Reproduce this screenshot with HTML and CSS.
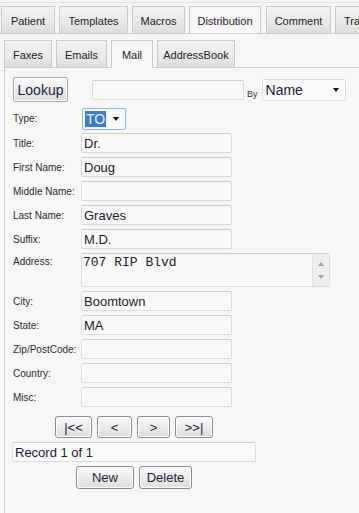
FILE: index.html
```html
<!DOCTYPE html>
<html lang="en">
<head>
  <meta charset="UTF-8">
  <meta name="viewport" content="width=device-width, initial-scale=1.0">
  <title>Distribution - Mail</title>
  <link rel="stylesheet" href="styles.css">
</head>
<body>

<div class="tabs">
  <span class="tab">Patient</span>
  <span class="tab">Templates</span>
  <span class="tab">Macros</span>
  <span class="tab active">Distribution</span>
  <span class="tab">Comment</span>
  <span class="tab">Transcription</span>
</div>

<div class="outer">
  <div class="subtabs">
    <span class="tab">Faxes</span>
    <span class="tab">Emails</span>
    <span class="tab active">Mail</span>
    <span class="tab">AddressBook</span>
  </div>

  <div class="pane">
    <div class="lookup-row">
      <button class="btn lookup">Lookup</button>
      <input class="field search" type="text">
      <span class="by">By</span>
      <div class="fake-select name-select">
        <span>Name</span>
        <span class="arrow"></span>
      </div>
    </div>

    <div class="form">
      <label>Type:</label>
      <div class="fake-select type-select">
        <span class="picked">TO</span>
        <span class="arrow"></span>
      </div>

      <label>Title:</label>
      <input class="field" type="text" value="Dr.">

      <label>First Name:</label>
      <input class="field" type="text" value="Doug">

      <label>Middle Name:</label>
      <input class="field" type="text">

      <label>Last Name:</label>
      <input class="field" type="text" value="Graves">

      <label>Suffix:</label>
      <input class="field" type="text" value="M.D.">

      <label class="top">Address:</label>
      <div class="address">
        <textarea>707 RIP Blvd</textarea>
        <div class="scrollbar">
          <span class="up"></span>
          <span class="down"></span>
        </div>
      </div>

      <label>City:</label>
      <input class="field" type="text" value="Boomtown">

      <label>State:</label>
      <input class="field" type="text" value="MA">

      <label>Zip/PostCode:</label>
      <input class="field" type="text">

      <label>Country:</label>
      <input class="field" type="text">

      <label>Misc:</label>
      <input class="field" type="text">
    </div>

    <div class="records">
      <div class="nav">
        <button class="btn first">|&lt;&lt;</button>
        <button class="btn prev">&lt;</button>
        <button class="btn next">&gt;</button>
        <button class="btn last">&gt;&gt;|</button>
      </div>
      <input class="field record" type="text" value="Record 1 of 1">
      <div class="actions">
        <button class="btn new">New</button>
        <button class="btn delete">Delete</button>
      </div>
    </div>
  </div>
</div>

</body>
</html>
```

FILE: styles.css
```css
body {
  margin: 0;
  background-color: #f7f7f7;
  font-family: "Liberation Sans", Arial, sans-serif;
  color: #222;
  overflow: hidden;
}

/* tabs */
.tabs {
  display: flex;
  gap: 4px;
  margin-top: 2px;
  padding: 3px 0 0 1px;
  border-top: 1px solid #e4e4e4;
  border-bottom: 1px solid #cdcdcd;
  white-space: nowrap;
  overflow: hidden;
  height: 27px;
}
.tab {
  flex-shrink: 0;
  box-sizing: border-box;
  height: 27px;
  padding: 8px 9px 0;
  font-size: 11px;
  color: #222;
  border: 1px solid #cbcbcb;
  border-bottom: none;
  background: linear-gradient(#f4f4f4, #e9e9e9 60%, #dcdcdc);
}
.tab.active {
  background: #f7f7f7;
  height: 28px;
  margin-bottom: -1px;
}
.tabs .tab:nth-child(1) { width: 54px; padding: 8px 0 0; text-align: center; }
.tabs .tab:nth-child(2) { width: 69px; padding: 8px 0 0; text-align: center; }
.tabs .tab:nth-child(3) { width: 53px; padding: 8px 0 0; text-align: center; }
.tabs .tab:nth-child(4) { width: 72px; padding: 8px 0 0; text-align: center; }
.tabs .tab:nth-child(5) { width: 65px; padding: 8px 0 0; text-align: center; margin-left: 1px; }
.tabs .tab:nth-child(6) { padding: 8px 8px 0; }

.outer {
  padding-top: 6px;
}
.subtabs {
  display: flex;
  gap: 4px;
  margin-left: 4px;
  border-bottom: 1px solid #cdcdcd;
  height: 27px;
}
.subtabs .tab {
  padding: 8px 8px 0;
}
.subtabs .tab:nth-child(3) { width: 42px; padding: 8px 0 0; text-align: center; }
.subtabs .tab:nth-child(4) { width: 78px; padding: 8px 0 0; text-align: center; }

.pane {
  margin-left: 4px;
  border-left: 1px solid #cdcdcd;
  height: 445px;
  padding: 9px 0 0 8px;
}

/* controls */
.btn {
  box-sizing: border-box;
  font-family: "Liberation Sans", Arial, sans-serif;
  font-size: 13px;
  color: #1c1c40;
  border: 1px solid #8c8c8c;
  border-radius: 3px;
  background: linear-gradient(#fbfbfb, #ececec 50%, #dcdcdc);
  box-shadow: inset 0 0 0 1px #ffffff;
  padding: 0;
}
.field {
  box-sizing: border-box;
  width: 151px;
  height: 20px;
  padding: 0 2px;
  font-family: "Liberation Sans", Arial, sans-serif;
  font-size: 13px;
  color: #1a1a2e;
  background-color: #f8f8f8;
  border: 1px solid #dcdcdc;
  border-top-color: #cfcfcf;
  border-radius: 2px;
  outline: none;
}

.lookup-row {
  display: flex;
  align-items: center;
  height: 25px;
}
.lookup {
  width: 55px;
  height: 25px;
  font-size: 14px;
  border-color: #a8a8a8;
  border-radius: 2px;
}
.search {
  width: 152px;
  margin-left: 24px;
}
.by {
  align-self: flex-end;
  font-size: 9px;
  line-height: 10px;
  margin: 0 4px 3px 3px;
  color: #333;
}

.fake-select {
  box-sizing: border-box;
  display: flex;
  align-items: center;
  justify-content: space-between;
  height: 22px;
  border: 1px solid #dadada;
  border-radius: 2px;
  background-color: #fafafa;
  font-size: 14px;
  color: #1a1a2e;
}
.arrow {
  width: 0;
  height: 0;
  border-left: 3.5px solid transparent;
  border-right: 3.5px solid transparent;
  border-top: 4px solid #111;
}
.name-select {
  width: 84px;
  padding: 0 6px 0 3px;
}
.type-select {
  width: 44px;
  height: 22px;
  margin-left: 1px;
  padding: 0 6px 0 2px;
  border-color: #8fb6de;
  font-size: 14px;
}
.picked {
  background-color: #3b7bd4;
  color: #e8f0ff;
  padding: 0 1px;
  line-height: 16px;
}

/* form */
.form {
  display: grid;
  grid-template-columns: 68px auto;
  row-gap: 4px;
  align-items: center;
  justify-items: start;
  margin-top: 6px;
}
.form label {
  font-size: 10px;
  color: #2a2a2a;
}
.form .type-select {
  margin-bottom: -1px;
}
.form label.top {
  align-self: start;
  padding-top: 3px;
}

.address {
  box-sizing: border-box;
  display: flex;
  width: 249px;
  height: 34px;
  border: 1px solid #dcdcdc;
  border-top-color: #cfcfcf;
  border-radius: 2px;
  background-color: #f8f8f8;
}
.address textarea {
  flex: 1;
  resize: none;
  border: none;
  outline: none;
  overflow: hidden;
  background: transparent;
  font-family: "Liberation Mono", "Courier New", monospace;
  font-size: 13px;
  color: #222;
  padding: 1px 1px;
  margin: 0;
}
.scrollbar {
  width: 16px;
  display: flex;
  flex-direction: column;
  justify-content: space-between;
  align-items: center;
  padding: 8px 0 7px;
  background-color: #efefef;
  border-left: 1px solid #e4e4e4;
}
.scrollbar .up,
.scrollbar .down {
  width: 0;
  height: 0;
  border-left: 3px solid transparent;
  border-right: 3px solid transparent;
}
.scrollbar .up { border-bottom: 4px solid #a0a0a0; }
.scrollbar .down { border-top: 4px solid #a0a0a0; }

/* record navigation */
.records {
  width: 244px;
  margin-top: 9px;
  margin-left: -1px;
}
.nav,
.actions {
  display: flex;
  justify-content: center;
  gap: 5px;
}
.nav .btn {
  height: 22px;
  font-size: 13px;
}
.first { width: 37px; }
.prev { width: 35px; }
.next { width: 33px; }
.last { width: 38px; }
.record {
  display: block;
  width: 244px;
  margin-top: 4px;
  background-color: #fafafa;
}
.actions {
  margin-top: 4px;
}
.actions .btn {
  height: 23px;
}
.new { width: 58px; }
.delete { width: 53px; }
```
